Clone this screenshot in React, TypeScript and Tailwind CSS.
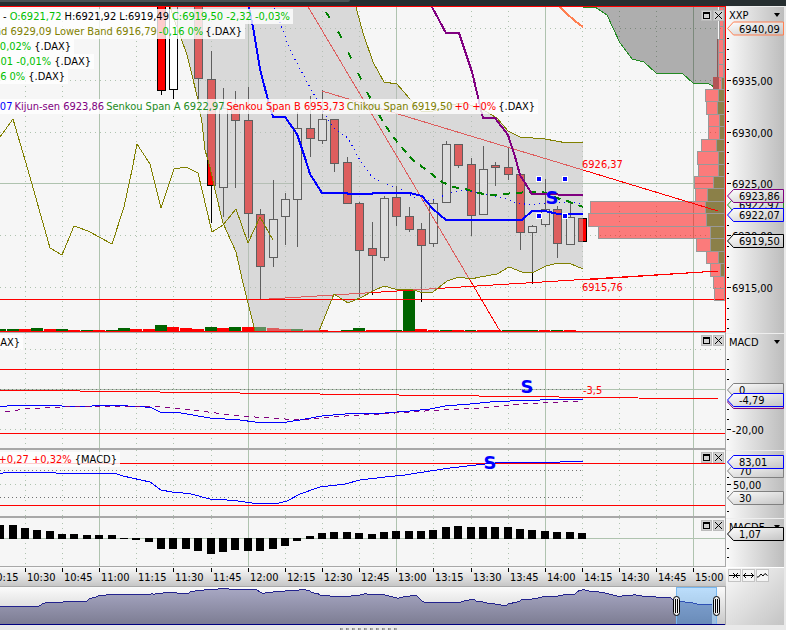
import { clsx } from "clsx";
import type { ReactNode } from "react";

const FONT = "font-['DejaVu_Sans_Condensed','DejaVu_Sans',sans-serif]";

const hours = [99, 248, 396, 545, 693];
const quarters = [25, 62, 136, 173, 211, 285, 322, 359, 433, 471, 508, 582, 619, 656];

const timeLabels: [number, string][] = [
  [-12, "10:15"], [25, "10:30"], [62, "10:45"], [99, "11:00"], [136, "11:15"],
  [173, "11:30"], [211, "11:45"], [248, "12:00"], [285, "12:15"], [322, "12:30"],
  [359, "12:45"], [396, "13:00"], [433, "13:15"], [471, "13:30"], [508, "13:45"],
  [545, "14:00"], [582, "14:15"], [619, "14:30"], [656, "14:45"], [693, "15:00"],
];

// x, wick top, body top, body bottom, wick bottom, falling
const candles: [number, number, number, number, number, boolean][] = [
  [161, 0, 0, 91, 95, true],
  [173, 0, 0, 90, 99, false],
  [198, 0, 0, 79, 104, true],
  [211, 51, 79, 186, 223, true],
  [223, 88, 108, 188, 217, false],
  [235, 91, 105, 121, 188, true],
  [248, 87, 120, 214, 238, true],
  [260, 209, 214, 267, 299, true],
  [273, 180, 219, 258, 267, false],
  [285, 193, 199, 217, 245, false],
  [297, 112, 128, 200, 247, false],
  [310, 96, 128, 139, 157, true],
  [322, 90, 119, 141, 144, false],
  [334, 119, 119, 164, 172, true],
  [347, 157, 162, 204, 204, true],
  [359, 202, 203, 251, 297, true],
  [372, 222, 248, 256, 295, true],
  [384, 196, 198, 258, 261, false],
  [396, 186, 197, 217, 226, true],
  [409, 207, 216, 230, 232, true],
  [421, 223, 229, 246, 302, true],
  [433, 199, 203, 244, 247, false],
  [446, 141, 144, 203, 203, false],
  [458, 144, 144, 166, 168, true],
  [471, 158, 164, 216, 236, true],
  [483, 146, 169, 215, 215, false],
  [495, 162, 165, 168, 186, true],
  [508, 148, 167, 175, 180, true],
  [520, 174, 174, 233, 250, true],
  [532, 225, 226, 233, 284, false],
  [545, 179, 209, 225, 227, false],
  [557, 206, 209, 244, 258, true],
  [570, 202, 217, 245, 245, false],
  [582, 218, 218, 242, 242, true],
];

// x, width, top, rising
const volumes: [number, number, number, boolean][] = [
  [0, 6, 329, true], [7, 12, 329, true], [19, 12, 329, false], [31, 12, 328, true],
  [44, 12, 329, false], [56, 12, 329, true], [68, 12, 330, false], [81, 12, 330, true],
  [93, 12, 330, false], [106, 12, 330, true], [118, 12, 328, true], [130, 12, 329, false],
  [143, 12, 329, false], [155, 12, 325, true], [167, 12, 327, false], [180, 12, 328, false],
  [192, 12, 329, false], [205, 12, 327, true], [217, 12, 328, false], [229, 12, 327, true],
  [242, 12, 327, false], [254, 12, 327, true], [267, 12, 328, false], [279, 12, 329, false],
  [291, 12, 329, true], [304, 12, 330, false], [316, 12, 330, false], [341, 12, 330, true],
  [353, 12, 328, true], [366, 24, 330, false], [390, 12, 330, true], [403, 12, 289, true],
  [415, 12, 329, false], [428, 11, 330, false], [440, 12, 330, true], [452, 12, 330, false],
  [465, 11, 330, true], [477, 24, 330, false], [502, 36, 330, true], [539, 11, 330, false],
  [551, 12, 330, true], [564, 12, 330, false],
];

// top, bottom, left edge, where the second colour starts
const profile: [number, number, number, number][] = [
  [7, 26, 719, 723], [26, 39, 719, 723], [39, 52, 718, 723], [52, 64, 718, 723],
  [64, 77, 718, 723], [77, 89, 718, 721],
  [89, 101, 705, 718], [101, 114, 706, 717], [114, 126, 708, 719], [126, 139, 708, 719],
  [139, 151, 701, 716], [151, 164, 697, 718], [164, 176, 698, 718], [176, 188, 694, 713],
  [188, 201, 695, 707], [201, 213, 590, 705], [213, 226, 588, 706], [226, 238, 598, 710],
  [238, 251, 696, 710], [251, 263, 706, 718], [263, 276, 710, 720], [276, 288, 713, 724],
  [288, 300, 714, 724],
];

// x, top, bottom
const histogram: [number, number, number][] = [
  [-4, 525, 539], [9, 525, 539], [21, 528, 539], [33, 530, 539], [46, 531, 539],
  [58, 534, 539], [70, 534, 539], [83, 535, 539], [95, 535, 539], [108, 535, 539],
  [120, 538, 539], [132, 538, 540], [145, 538, 542], [157, 538, 549], [169, 538, 549],
  [182, 538, 549], [194, 538, 551], [207, 538, 554], [219, 538, 552], [231, 538, 550],
  [244, 538, 551], [256, 538, 551], [269, 538, 549], [281, 538, 546], [293, 538, 541],
  [306, 536, 539], [318, 533, 539], [330, 532, 539], [343, 532, 539], [355, 533, 539],
  [368, 534, 539], [380, 532, 539], [392, 531, 539], [405, 531, 539], [417, 531, 539],
  [429, 530, 539], [442, 527, 539], [454, 526, 539], [467, 527, 539], [479, 527, 539],
  [491, 527, 539], [504, 527, 539], [516, 529, 539], [528, 530, 539], [541, 531, 539],
  [553, 532, 539], [566, 532, 539], [578, 533, 539],
];

const bandLower =
  "168,0 175,22 181,38 187,55 192,75 198,100 202,123 205,150 210,167 215,190 223,223 236,252 243,283 255,331";
const bandLowerRight =
  "319,331 334,294 348,303 360,298 373,291 384,286 395,289 410,289 420,292 433,292 447,281 459,277 471,279 480,277 497,274 509,267 522,272 532,273 546,266 558,263 571,264 583,269";
const bandUpper =
  "583,142 567,143 545,139 520,137 508,131 497,118 480,108 463,103 450,105 433,111 422,112 410,99 397,84 384,82 373,62 363,33 354,0";
const cloudEdge =
  "583,7 595,7 607,15 613,28 620,43 632,59 644,62 656,73 667,74 682,73 693,83 707,83 718,89";

const history: [number, number][] = [
  [0, 606], [10, 607], [25, 607], [39, 607], [43, 603], [55, 601], [85, 602], [92, 598],
  [100, 596], [112, 594], [125, 595], [150, 595], [165, 593], [185, 593], [200, 590],
  [215, 590], [225, 588], [240, 590], [255, 590], [262, 593], [280, 592], [305, 590],
  [315, 593], [322, 596], [350, 596], [365, 593], [385, 595], [398, 598], [416, 596],
  [424, 602], [455, 602], [472, 599], [492, 604], [505, 605], [522, 599], [540, 598],
  [551, 596], [560, 595], [575, 594], [582, 590], [590, 592], [605, 593], [618, 596],
  [630, 596], [635, 594], [642, 596], [652, 595], [660, 597], [668, 597], [675, 599],
  [678, 602], [683, 601], [693, 603], [697, 605], [712, 605],
];

// Fills in the small tick noise between the main turning points.
const historyPoints = history
  .flatMap(([x, y], i) => {
    const next = history[i + 1];
    if (!next) return [`${x},${y}`];
    const steps = Math.max(1, Math.floor((next[0] - x) / 2));
    return Array.from({ length: steps }, (_, k) => {
      const px = x + ((next[0] - x) * k) / steps;
      const py = y + ((next[1] - y) * k) / steps + 1.4 * Math.sin(px * 2.3) * Math.cos(px * 0.7);
      return `${Math.round(px)},${Math.round(py)}`;
    });
  })
  .join(" ");

function Line({ points, color, width = 1, dash }: { points: string; color: string; width?: number; dash?: string }) {
  return <polyline points={points} fill="none" stroke={color} strokeWidth={width} strokeDasharray={dash} />;
}

function Grid({ top, bottom, dotted }: { top: number; bottom: number; dotted: number[] }) {
  return (
    <g stroke="#afc3af">
      {hours.map((x) => (
        <path key={x} d={`M${x + 0.5} ${top}V${bottom}`} />
      ))}
      <g strokeDasharray="1 4">
        {quarters.map((x) => (
          <path key={x} d={`M${x + 0.5} ${top}V${bottom}`} />
        ))}
        {dotted.map((y) => (
          <path key={y} d={`M0 ${y + 0.5}H725`} />
        ))}
      </g>
    </g>
  );
}

function Plot({ top, height, label, className, children }: {
  top: number;
  height: number;
  label: string;
  className: string;
  children: ReactNode;
}) {
  return (
    <svg
      role="img"
      aria-label={label}
      viewBox={`0 ${top} 726 ${height}`}
      preserveAspectRatio="xMaxYMin meet"
      shapeRendering="crispEdges"
      className={clsx("block w-full", className)}
    >
      {children}
    </svg>
  );
}

function Marker({ x, y }: { x: number; y: number }) {
  return (
    <text x={x} y={y} textAnchor="middle" fill="#0000ff" className="font-['DejaVu_Sans'] text-[18px] font-bold">
      S
    </text>
  );
}

function PanelButtons({ className = "top-0.5" }: { className?: string }) {
  return (
    <div className={clsx("absolute right-0.5 flex gap-px", className)}>
      <button aria-label="Maximize" className="size-[11px] border border-[#bbb] bg-[#d2d2d2]">
        <svg viewBox="0 0 9 9" className="size-[9px]" shapeRendering="crispEdges">
          <path d="M1 1h7v7h-7zM2 3v4h5v-4z" fillRule="evenodd" />
        </svg>
      </button>
      <button aria-label="Close" className="size-[11px] border border-[#bbb] bg-[#d2d2d2]">
        <svg viewBox="0 0 9 9" className="size-[9px]">
          <path d="M1 1l7 7M8 1l-7 7" stroke="#000" />
        </svg>
      </button>
    </div>
  );
}

function Legend({ className, parts }: { className: string; parts: [string, string][] }) {
  return (
    <div className={clsx("flex h-[15px] items-center justify-end overflow-hidden bg-white/80 pr-[3px] whitespace-nowrap", className)}>
      {parts.map(([color, text]) => (
        <span key={text} className={color}>{text}</span>
      ))}
    </div>
  );
}

function Tag({ y, color, text, x = 739 }: { y: number; color: string; text: string; x?: number }) {
  return (
    <g>
      <path d={`M727.5 ${y}L733.5 ${y - 6.5}H783.5V${y + 6.5}H733.5Z`} fill="url(#tag)" stroke={color} />
      <text x={x} y={y + 4}>{text}</text>
    </g>
  );
}

function Axis({ title, top, height, className, minor, major, children }: {
  title: string;
  top: number;
  height: number;
  className: string;
  minor: number[];
  major: [number, string][];
  children: ReactNode;
}) {
  return (
    <div className={clsx("relative border-t border-[#eee] bg-linear-to-r from-[#fafafa] to-[#bdbdbd]", className)}>
      {title && (
        <button className="absolute inset-x-0 top-0 flex h-4 items-center justify-between pr-1 pl-[3px]">
          {title}
          <span className="size-0 border-x-[3px] border-t-4 border-x-transparent border-t-black" />
        </button>
      )}
      <svg viewBox={`726 ${top + 1} 58 ${height - 1}`} className="pointer-events-none relative block size-full">
        <g shapeRendering="crispEdges">
          {minor.map((y) => (
            <rect key={y} x="727" y={y} width="2" height="1" />
          ))}
          {major.map(([y]) => (
            <rect key={y} x="727" y={y} width="4" height="1" />
          ))}
        </g>
        {major.map(([y, text]) => (
          <text key={y} x={text.length > 5 ? 732 : 733} y={y + 5}>{text}</text>
        ))}
        {children}
      </svg>
    </div>
  );
}

function PricePanel() {
  return (
    <div className="relative min-w-0 overflow-hidden bg-[#f6f6f6]">
      <Plot label="DAX price" top={6} height={327} className="h-[327px]">
        <Grid top={6} bottom={331} dotted={[28, 80, 132, 235, 287]} />
        <rect y="183" width="725" height="1" fill="#afc3af" />

        {volumes.map(([x, w, top, up]) => (
          <rect key={x} x={x} y={top} width={w} height={331 - top} fill={up ? "#006400" : "#ff0000"} />
        ))}
        {candles.map(([x, high, top, bottom, low, down]) => (
          <g key={x}>
            <rect x={x} y={high} width="1" height={low - high} />
            <rect x={x - 4} y={top} width="9" height={bottom - top} />
            <rect x={x - 3} y={top + 1} width="7" height={Math.max(bottom - top - 2, 1)} fill={down ? "#ff0000" : "#ffffff"} />
          </g>
        ))}
        <Line points="304,0 405,170 500,331" color="#ff0000" />
        <Line points="322,91 583,170 718,211" color="#ff0000" />
        <Line points="269,299 718,271" color="#ff0000" />
        <polygon points={`${bandLower} ${bandLowerRight} ${bandUpper}`} fill="#bcbcbc" fillOpacity="0.5" />
        <rect y="299" width="725" height="1" fill="#ff0000" />

        <Line points={bandLower} color="#808000" />
        <Line points={bandLowerRight} color="#808000" />
        <Line points={bandUpper} color="#808000" />
        <Line
          points="0,137 13,119 28,170 50,248 62,255 74,226 88,231 112,244 124,207 132,170 137,144 150,164 161,208 174,169 186,167 198,173 212,232 223,225 236,209 248,243 260,217 273,240"
          color="#808000"
        />
        <Line
          points="273,3 278,17 290,50 307,82 317,100 327,117 333,128 348,138 358,157 365,167 372,177 383,183 403,190 415,198 423,202 438,198 447,194 462,190 480,193 500,197 517,203 532,205 547,203 573,202 583,204"
          color="#0000ff"
          dash="1 4"
        />
        <Line points="326,12 340,35 351,58 360,77 367,92" color="#008000" width={2} dash="7 16" />
        <Line
          points="367,92 383,122 390,132 398,143 413,160 425,169 442,182 453,187 465,189 475,192 488,195 500,195 512,193 533,192 543,192 557,198 570,202 583,207"
          color="#008000"
          width={2}
          dash="7 6"
        />
        <Line
          points="248,0 249,7 253,27 260,69 268,100 273,117 285,117 297,134 306,161 310,174 322,193 347,193 348,194 372,194 373,193 410,193 422,196 433,209 446,220 522,220 532,211 545,211 558,214 583,214"
          color="#0000ff"
          width={2}
        />
        <Line
          points="429,0 432,7 446,33 459,33 472,72 483,118 495,118 508,135 516,160 520,175 532,194 583,195"
          color="#800080"
          width={2}
        />
        <Line points="558,5 566,13 575,21 583,27" color="#ff7f50" width={2} />

        <polygon points={`${cloudEdge} 718,6`} fill="#000" fillOpacity="0.29" />
        <Line points={cloudEdge} color="#228b22" />
        {profile.map(([top, bottom, x, split]) => (
          <g key={top}>
            <rect x={x} y={top} width={725 - x} height={bottom - top} fill="#ff0000" fillOpacity="0.5" />
            <rect x={split} y={top} width={725 - split} height={bottom - top} fill="#8b8048" />
            <path d={`M${x + 0.5} ${bottom + 0.5}V${top + 0.5}H724.5V${bottom + 0.5}ZM${split + 0.5} ${top}V${bottom}`} fill="none" stroke="#999999" />
          </g>
        ))}
        <rect x="713" y="77" width="6" height="12" fill="#b35555" />
        <rect x="717" y="39" width="1" height="38" fill="#8c5555" />
        <Line points="583,170 718,211" color="#ff0000" />
        <Line points="583,280 718,271" color="#ff0000" />

        {[[539, 179], [565, 179], [539, 216], [565, 216]].map(([x, y]) => (
          <g key={`${x}-${y}`}>
            <rect x={x - 3} y={y - 3} width="6" height="6" fill="#fff" />
            <rect x={x - 2} y={y - 2} width="4" height="4" fill="#0000ff" />
          </g>
        ))}
        <Marker x={552} y={204} />
        <text x="582" y="168" fill="#ff0000">6926,37</text>
        <text x="582" y="291" fill="#ff0000">6915,76</text>

        <rect y="332" width="726" height="1" fill="#a8a8a8" />
        <path d="M0 6.5H725.5V331.5H0" fill="none" stroke="#ff0000" />
      </Plot>
      <div className="absolute top-[3px] left-0">
        <Legend
          className="w-[293px] gap-[3px]"
          parts={[
            ["text-black", "-"],
            ["text-[#00c000]", "O:6921,72"],
            ["text-black", "H:6921,92"],
            ["text-black", "L:6919,49"],
            ["text-[#00c000]", "C:6919,50 -2,32 -0,03%"],
          ]}
        />
        <Legend
          className="w-[245px] gap-0.5"
          parts={[
            ["text-[#808000]", "nd 6929,09 Lower Band 6916,79"],
            ["text-[#00c000]", "-0,16 0%"],
            ["text-black", "{.DAX}"],
          ]}
        />
        <Legend className="w-[74px] gap-[3px]" parts={[["text-[#00c000]", "-0,02%"], ["text-black", "{.DAX}"]]} />
        <Legend className="w-[94px] gap-[3px]" parts={[["text-[#00c000]", ",01 -0,01%"], ["text-black", "{.DAX}"]]} />
        <Legend className="w-[68px] gap-[3px]" parts={[["text-[#00c000]", "66 0%"], ["text-black", "{.DAX}"]]} />
        <Legend
          className="mt-[15px] w-[538px] gap-0.5"
          parts={[
            ["text-[#0000ff]", "22,07"],
            ["text-[#800080]", "Kijun-sen 6923,86"],
            ["text-[#228b22]", "Senkou Span A 6922,97"],
            ["text-[#ff0000]", "Senkou Span B 6953,73"],
            ["text-[#808000]", "Chikou Span 6919,50"],
            ["text-[#ff0000]", "+0 +0%"],
            ["text-black", "{.DAX}"],
          ]}
        />
      </div>
      <PanelButtons className="top-1" />
    </div>
  );
}

function MacdPanel() {
  return (
    <div className="relative min-w-0 overflow-hidden bg-[#f6f6f6]">
      <Plot label="MACD" top={333} height={117} className="h-[117px]">
        <Grid top={333} bottom={448} dotted={[349, 429]} />
        <rect y="389" width="725" height="1" fill="#afc3af" />
        <path d="M0 389.5H583" stroke="#707070" strokeDasharray="1 3" />
        <rect y="369" width="725" height="1" fill="#ff0000" />
        <rect y="433" width="725" height="1" fill="#ff0000" />
        <Line points="0,390 718,399" color="#ff0000" />
        <Line
          points="0,407 10,405.5 57,405.5 66,406.5 119,405.5 145,407 152,408 160,412 181,413 210,418 240,420 255,422 287,422 300,420 322,416 345,414 385,413 410,411 430,409 445,406 470,404 490,402 510,401 540,400 583,399.5"
          color="#0000ff"
        />
        <Line
          points="5,412 25,409 62,407 105,406 150,406 170,408 200,411 240,416 285,419 310,419 345,416 380,414 410,412 440,410 480,408 520,404 583,401"
          color="#800080"
          dash="5 5"
        />
        <Marker x={527} y={393} />
        <text x="583" y="394" fill="#ff0000">-3,5</text>
        <rect x="725" y="333" width="1" height="117" fill="#a8a8a8" />
        <rect y="448" width="726" height="2" fill="#a8a8a8" />
      </Plot>
      <div className="absolute top-0.5 left-0">
        <Legend className="w-[23px]" parts={[["text-black", "AX}"]]} />
      </div>
      <PanelButtons />
    </div>
  );
}

function RsiPanel() {
  return (
    <div className="relative min-w-0 overflow-hidden bg-[#f6f6f6]">
      <Plot label="RSI" top={450} height={68} className="h-[68px]">
        <Grid top={450} bottom={516} dotted={[484]} />
        <path d="M0 470.5H583M0 497.5H583" stroke="#707070" strokeDasharray="1 3" />
        <rect y="463" width="725" height="1" fill="#ff0000" />
        <rect y="505" width="725" height="1" fill="#ff0000" />
        <Line
          points="0,473.5 7,472.5 54,472.5 60,474 68,473.5 115,473.5 123,476 150,482 161,490 172,492 189,493.5 210,499 235,500.5 255,503.5 277,503.5 287,501 300,494 320,487 345,484 360,480 385,477 405,475 430,471 450,468 485,464 500,462.5 550,462.5 570,461.5 583,461.5"
          color="#0000ff"
        />
        <Marker x={490} y={469} />
        <rect x="725" y="450" width="1" height="68" fill="#a8a8a8" />
        <rect y="516" width="726" height="2" fill="#a8a8a8" />
      </Plot>
      <div className="absolute top-0.5 left-0">
        <Legend className="w-[120px] gap-[3px]" parts={[["text-[#ff0000]", "+0,27 +0,32%"], ["text-black", "{MACD}"]]} />
      </div>
      <PanelButtons />
    </div>
  );
}

function HistogramPanel() {
  return (
    <div className="relative min-w-0 overflow-hidden bg-[#f6f6f6]">
      <Plot label="MACD histogram" top={518} height={49} className="h-[49px]">
        <Grid top={518} bottom={566} dotted={[]} />
        <rect y="538" width="725" height="1" fill="#afc3af" />
        {histogram.map(([x, top, bottom]) => (
          <rect key={x} x={x} y={top} width="8" height={bottom - top} />
        ))}
        <rect x="725" y="518" width="1" height="49" fill="#a8a8a8" />
        <rect y="566" width="726" height="1" fill="#a8a8a8" />
      </Plot>
      <PanelButtons />
    </div>
  );
}

function TimeAxis() {
  return (
    <div className="min-w-0 bg-linear-to-b from-[#fafafa] to-[#c4c4c4]">
      <Plot label="Time axis" top={567} height={20} className="h-5">
        {timeLabels.map(([x, text]) => (
          <g key={text}>
            <rect x={x} y="568" width="1" height="4" />
            <text x={x + 2} y="581">{text}</text>
          </g>
        ))}
        <rect y="586" width="726" height="1" fill="#a8a8a8" />
      </Plot>
    </div>
  );
}

function Handle({ x }: { x: number }) {
  return (
    <g shapeRendering="auto">
      <rect x={x - 2.5} y="596.5" width="6" height="19" rx="3" fill="#eee" stroke="#000" />
      <path d={`M${x - 0.5} 599V613M${x + 1.5} 599V613`} stroke="#000" />
    </g>
  );
}

function Navigator() {
  return (
    <div className="min-w-0 bg-linear-to-b from-[#fbfbfb] to-[#c8c8c8]">
      <Plot label="Full history" top={587} height={38} className="h-[38px]">
        <polygon points={`${historyPoints} 712,624 0,624`} fill="url(#history)" />
        <Line points={historyPoints} color="#23238e" />
        <rect y="624" width="725" height="1" fill="#000080" />
        <rect x="676" y="587" width="40" height="37" fill="#48a8ff" fillOpacity="0.35" />
        <path d="M676.5 624V587.5H716.5V624" fill="none" stroke="#78b8f0" />
        <Handle x={676} />
        <Handle x={716} />
        <rect x="725" y="587" width="1" height="38" fill="#a8a8a8" />
      </Plot>
    </div>
  );
}

const tools = [
  { label: "Compress", path: "M0 5.5H11M4 3L6.5 5.5L4 8M9 3L6.5 5.5L9 8" },
  { label: "Expand", path: "M0 5.5H11M3 3L0.5 5.5L3 8M8 3L10.5 5.5L8 8" },
  { label: "Line style", path: "M0 7H1.5L4 4L6 6L8 3.5L10.5 5.5" },
];

export default function App() {
  return (
    <main className={clsx("min-h-screen overflow-hidden bg-[#e9e9e9] text-[11px] leading-none", FONT)}>
      <svg width="0" height="0" className="absolute">
        <defs>
          <linearGradient id="tag" x2="1" y2="1">
            <stop offset="0" stopColor="#ffffff" />
            <stop offset="1" stopColor="#c4c4c4" />
          </linearGradient>
          <linearGradient id="history" x2="0" y2="1">
            <stop offset="0" stopColor="#a8a8c4" />
            <stop offset="1" stopColor="#7d7d93" />
          </linearGradient>
        </defs>
      </svg>

      <div className="h-1.5 bg-[#262e30]">
        <div className="h-0.5 w-[350px] rounded-br bg-[#4a5254]" />
      </div>

      <div className="grid grid-cols-[1fr_58px] pr-0.5">
        <PricePanel />
        <Axis
          title="XXP"
          top={6}
          height={327}
          className="h-[327px]"
          minor={[38, 49, 59, 69, 90, 101, 111, 121, 142, 152, 163, 173, 225, 246, 256, 267, 277, 298, 308, 319, 328]}
          major={[[80, "6935,00"], [132, "6930,00"], [183, "6925,00"], [235, "6920,00"], [287, "6915,00"]]}
        >
          <Tag y={28.5} color="#ff7f50" text="6940,09" />
          <Tag y={205} color="#228b22" text="6922,97" />
          <Tag y={196} color="#800080" text="6923,86" />
          <Tag y={215} color="#0000ff" text="6922,07" />
          <Tag y={241} color="#000000" text="6919,50" />
        </Axis>

        <MacdPanel />
        <Axis
          title="MACD"
          top={333}
          height={117}
          className="h-[117px]"
          minor={[359, 369, 379, 409, 419, 439]}
          major={[[429, "-20,00"]]}
        >
          <Tag y={390} color="#808080" text="0" />
          <Tag y={402} color="#800080" text="" />
          <Tag y={400} color="#0000ff" text="-4,79" />
        </Axis>

        <RsiPanel />
        <Axis title="" top={450} height={68} className="h-[68px]" minor={[477, 491, 511]} major={[[484, "50,00"]]}>
          <Tag y={471} color="#808080" text="70" />
          <Tag y={462} color="#0000ff" text="83,01" />
          <Tag y={498} color="#808080" text="30" />
        </Axis>

        <HistogramPanel />
        <Axis title="MACDF" top={518} height={49} className="h-[49px]" minor={[548, 557]} major={[]}>
          <Tag y={534} color="#000000" text="1,07" />
        </Axis>

        <TimeAxis />
        <div className="row-span-2 flex gap-px border-t border-white bg-linear-to-br from-[#fafafa] to-[#c4c4c4] pt-px pl-0.5">
          {tools.map((tool) => (
            <button key={tool.label} aria-label={tool.label} className="size-[13px] border border-[#c4c4c4] bg-[#f4f4f4]">
              <svg viewBox="0 0 11 11" className="size-[11px]">
                <path d={tool.path} fill="none" stroke="#000" />
              </svg>
            </button>
          ))}
        </div>
        <Navigator />
      </div>

      <div className="flex h-[5px] items-end justify-center gap-[3px] pr-[50px]">
        {Array.from({ length: 10 }, (_, i) => (
          <span key={i} className="h-0.5 w-[3px] border-l border-[#888] bg-[#aaa]" />
        ))}
      </div>
    </main>
  );
}
